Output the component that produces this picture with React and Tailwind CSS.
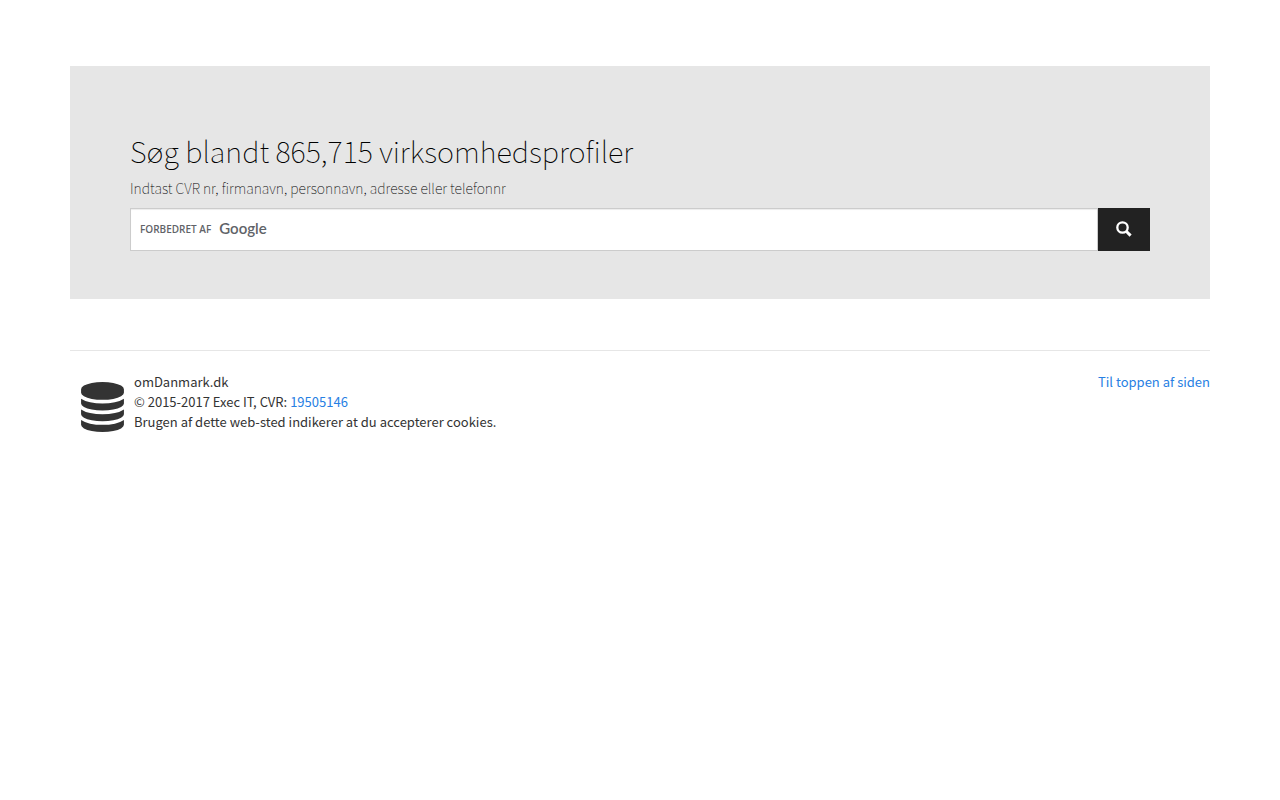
import React, { useState } from 'react';

const DatabaseIcon = () => (
    <svg viewBox="0 0 1536 1792" className="h-[50px] w-[43px] shrink-0 fill-current" aria-hidden="true">
        <path d="M768 768q237 0 443-43t325-127v170q0 69-103 128t-280 93.5-385 34.5-385-34.5-280-93.5-103-128v-170q119 84 325 127t443 43zm0 768q237 0 443-43t325-127v170q0 69-103 128t-280 93.5-385 34.5-385-34.5-280-93.5-103-128v-170q119 84 325 127t443 43zm0-384q237 0 443-43t325-127v170q0 69-103 128t-280 93.5-385 34.5-385-34.5-280-93.5-103-128v-170q119 84 325 127t443 43zm0-1152q208 0 385 34.5t280 93.5 103 128v128q0 69-103 128t-280 93.5-385 34.5-385-34.5-280-93.5-103-128v-128q0-69 103-128t280-93.5 385-34.5z" />
    </svg>
);

const SearchIcon = () => (
    <svg viewBox="0 0 16 16" className="h-4 w-4" fill="none" stroke="currentColor" aria-hidden="true">
        <circle cx="6.5" cy="6.5" r="5.2" strokeWidth="2.3" />
        <path d="M10.2 10.2L14.6 14.6" strokeWidth="3" />
    </svg>
);

const App = () => {
    const [query, setQuery] = useState('');

    return (
        <div id="top" className="mx-auto w-full max-w-[1170px] px-[15px] pt-[66px] font-['Noto_Sans_CJK_SC',sans-serif] text-[#333]">
            <main className="bg-[#e6e6e6] px-[60px] pt-[62px] pb-12">
                <h1 className="text-[29px] leading-[44px] font-thin text-black">Søg blandt 865,715 virksomhedsprofiler</h1>
                <form onSubmit={(e) => e.preventDefault()}>
                    <label htmlFor="query" className="block pt-[3px] pb-[7px] text-[14px] leading-[26px] font-thin text-black">
                        Indtast CVR nr, firmanavn, personnavn, adresse eller telefonnr
                    </label>
                    <div className="flex h-[43px]">
                        <div className="relative flex-1">
                            <input
                                id="query"
                                type="text"
                                value={query}
                                onChange={(e) => setQuery(e.target.value)}
                                className="h-full w-full border border-[#ccc] bg-white px-[18px] text-[15px] shadow-[inset_0_1px_1px_rgba(0,0,0,0.075)] outline-none"
                            />
                            {!query && (
                                <div className="pointer-events-none absolute inset-y-0 left-[10px] flex items-center gap-2 text-[#5f6368]">
                                    <span className="font-['Open_Sans',sans-serif] text-[10px] font-semibold">FORBEDRET AF</span>
                                    <span className="pb-[2px] font-['Lato',sans-serif] text-[15px] font-semibold">Google</span>
                                </div>
                            )}
                        </div>
                        <button type="submit" aria-label="Søg" className="flex w-[52px] items-center justify-center bg-[#222] pb-[2px] text-white">
                            <SearchIcon />
                        </button>
                    </div>
                </form>
            </main>

            <footer className="mt-[51px] flex justify-between border-t border-[#e6e6e6] pt-[21px] text-[13px] leading-5">
                <div className="flex items-start gap-[10px] pl-[11px]">
                    <div className="pt-[10px]">
                        <DatabaseIcon />
                    </div>
                    <div>
                        <p>omDanmark.dk</p>
                        <p>© 2015-2017 Exec IT, CVR: <a href="#cvr" className="text-[#2780e3]">19505146</a></p>
                        <p>Brugen af dette web-sted indikerer at du accepterer cookies.</p>
                    </div>
                </div>
                <a href="#top" className="text-[#2780e3]">Til toppen af siden</a>
            </footer>
        </div>
    );
};

export default App;
